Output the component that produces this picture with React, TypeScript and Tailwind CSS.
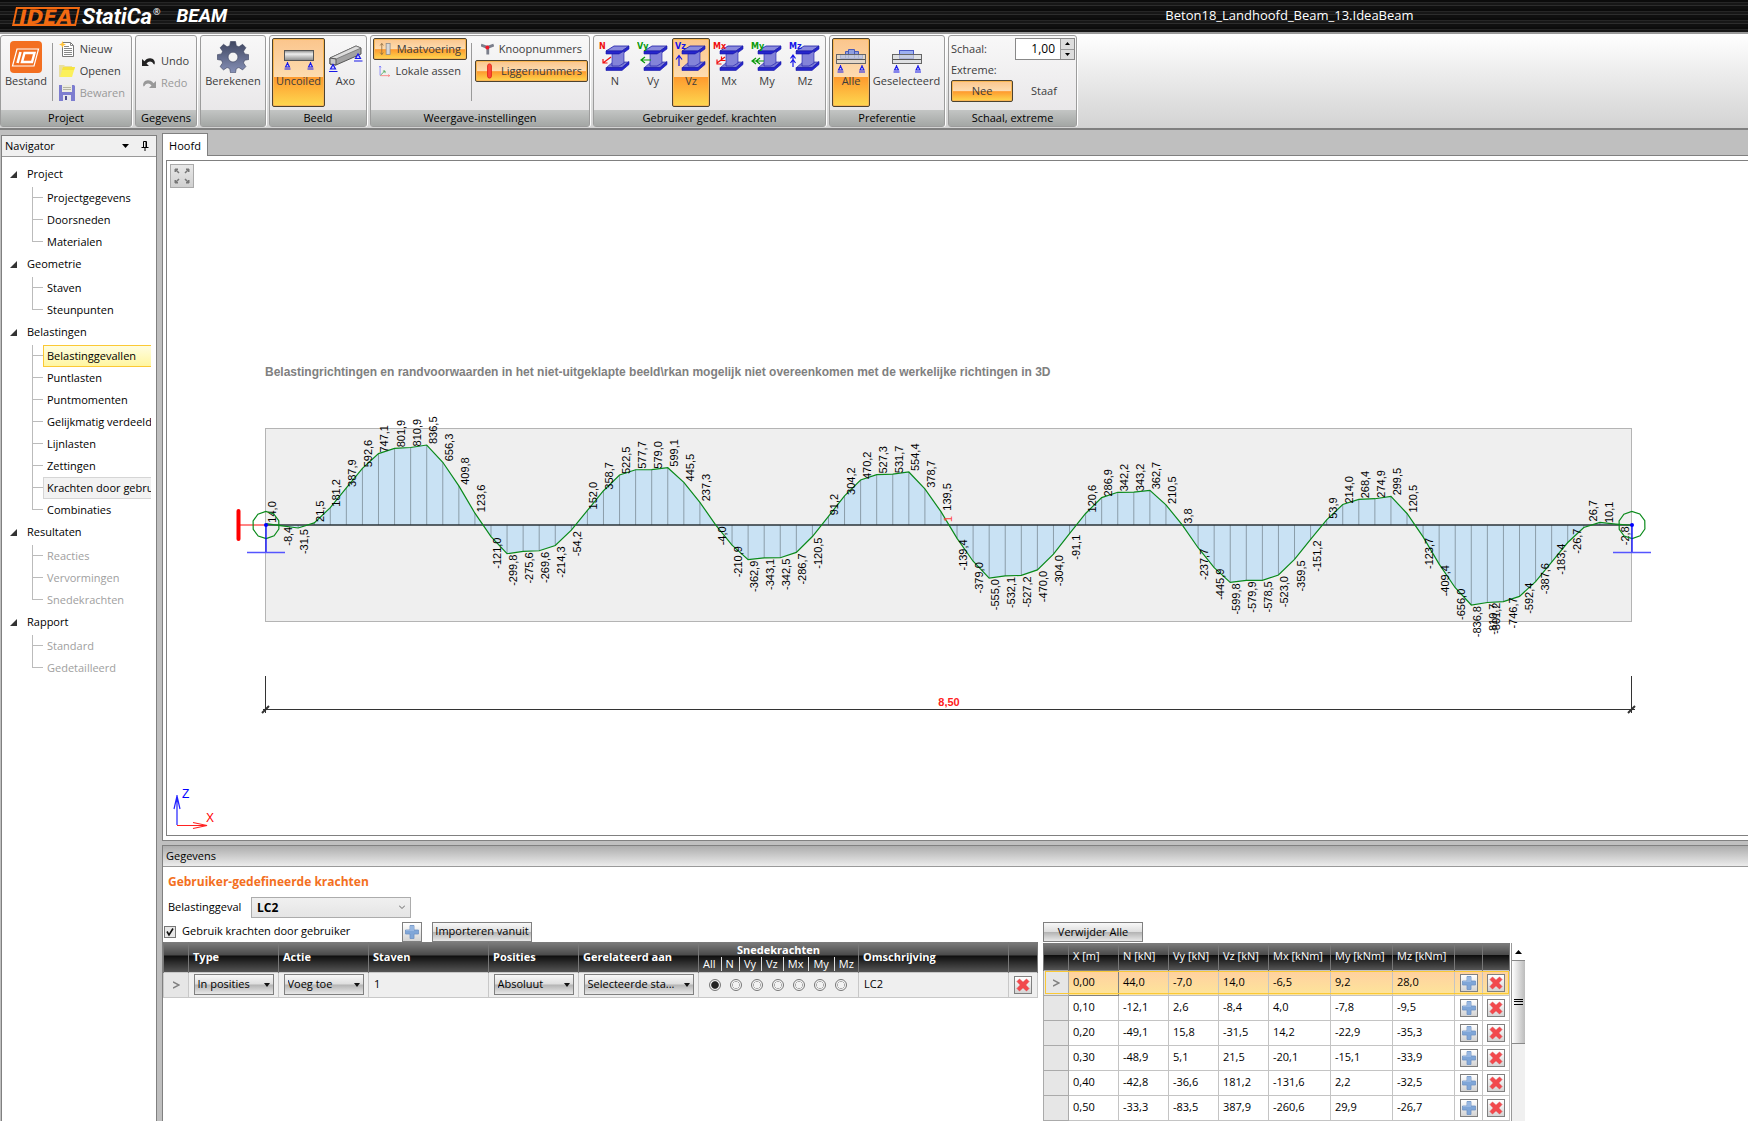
import type { ReactNode } from "react";
import clsx from "clsx";

/* ---------- data ---------- */

const NAV = [
  { title: "Project", items: ["Projectgegevens", "Doorsneden", "Materialen"] },
  { title: "Geometrie", items: ["Staven", "Steunpunten"] },
  {
    title: "Belastingen",
    items: [
      "Belastinggevallen",
      "Puntlasten",
      "Puntmomenten",
      "Gelijkmatig verdeeld",
      "Lijnlasten",
      "Zettingen",
      "Krachten door gebruiker",
      "Combinaties",
    ],
  },
  { title: "Resultaten", disabled: true, items: ["Reacties", "Vervormingen", "Snedekrachten"] },
  { title: "Rapport", disabled: true, items: ["Standard", "Gedetailleerd"] },
];

// Vz every 0,10 m
const VZ = [
  14.0, -8.4, -31.5, 21.5, 181.2, 387.9, 592.6, 747.1, 801.9, 810.9, 836.5, 656.3, 409.8, 123.6,
  -121.0, -299.8, -275.6, -269.6, -214.3, -54.2, 152.0, 358.7, 522.5, 577.7, 579.0, 599.1, 445.5,
  237.3, -4.0, -210.9, -362.9, -343.1, -342.5, -286.7, -120.5, 91.2, 304.2, 470.2, 527.3, 531.7,
  554.4, 378.7, 139.5, -139.4, -379.0, -555.0, -532.1, -527.2, -470.0, -304.0, -91.1, 120.6, 286.9,
  342.2, 343.2, 362.7, 210.5, 3.8, -237.7, -445.9, -599.8, -579.9, -578.5, -523.0, -359.5, -151.2,
  53.9, 214.0, 268.4, 274.9, 299.5, 120.5, -123.7, -409.4, -656.0, -836.8, -810.7, -801.2, -746.7,
  -592.4, -387.6, -183.4, -26.7, 26.7, 10.1, -2.8,
];

const FORCE_COLS = ["X [m]", "N [kN]", "Vy [kN]", "Vz [kN]", "Mx [kNm]", "My [kNm]", "Mz [kNm]"];
const FORCES = [
  ["0,00", "44,0", "-7,0", "14,0", "-6,5", "9,2", "28,0"],
  ["0,10", "-12,1", "2,6", "-8,4", "4,0", "-7,8", "-9,5"],
  ["0,20", "-49,1", "15,8", "-31,5", "14,2", "-22,9", "-35,3"],
  ["0,30", "-48,9", "5,1", "21,5", "-20,1", "-15,1", "-33,9"],
  ["0,40", "-42,8", "-36,6", "181,2", "-131,6", "2,2", "-32,5"],
  ["0,50", "-33,3", "-83,5", "387,9", "-260,6", "29,9", "-26,7"],
];

const PARTS = ["All", "N", "Vy", "Vz", "Mx", "My", "Mz"];

/* ---------- icons ---------- */

const FileIcon = () => (
  <svg width="16" height="16" viewBox="0 0 16 16">
    <path d="M3.500 1.500h8l3 3v11h-11z" fill="#fff" stroke="#777" />
    <path d="M11.500 1.500v3h3M5 5.500h5M5 7.500h8M5 9.500h8M5 11.500h8M5 13.500h8" fill="none" stroke="#888" />
    <path d="M3.500 0l1 2.500L7 3.500l-2.500 1-1 2.500-1-2.500L0 3.500l2.500-1z" fill="#ffc23c" />
  </svg>
);

const FolderIcon = () => (
  <svg width="16" height="16" viewBox="0 0 16 16">
    <path d="M0 2h5l1 1h7v11H0z" fill="#e9dfa0" />
    <path d="M4 4h12l-3 10H1z" fill="#fbf05c" />
    <path d="M4 4h12l-1 3H3z" fill="#f6e33f" />
  </svg>
);

const SaveIcon = () => (
  <svg width="16" height="16" viewBox="0 0 16 16">
    <path d="M0 0h15l1 1v15H0z" fill="#7d7dd0" />
    <path d="M3 0h10v7H3z" fill="#ecece0" />
    <path d="M4 2.500h8M4 4.500h8" stroke="#b5b5a5" />
    <path d="M4 10h8v6H4z" fill="#e6e6ee" />
    <path d="M6 11h2v4H6z" fill="#4c4c90" />
  </svg>
);

const UndoIcon = ({ flip }: { flip?: boolean }) => (
  <svg
    width="14"
    height="9"
    viewBox="0 0 14 9"
    className={clsx(flip && "-scale-x-100")}
    fill={flip ? "#999" : "#222"}
  >
    <path d="M0 2v7h7L4.500 6.500C6.500 4 9.500 3.500 11.500 7l1 .5C14 4 11 1 8 1.200 5.500 1.200 3.800 2.500 2.500 4.200z" />
  </svg>
);

const GearIcon = () => (
  <svg width="32" height="32" viewBox="0 0 32 32">
    <defs>
      <linearGradient id="gear" x1="0" y1="0" x2="0" y2="1">
        <stop offset="0" stopColor="#3f4660" />
        <stop offset="1" stopColor="#8791b8" />
      </linearGradient>
    </defs>
    <g fill="url(#gear)" stroke="#3a415c" strokeWidth="0.600">
      <path
        fillRule="evenodd"
        d="M13.500 0.500h5l.8 4.200 2.600 1.100 3.700-2.500 3.300 3.400-2.400 3.600 1.100 2.600 4.200.8v4.800l-4.200.8-1.100 2.600 2.400 3.700-3.300 3.300-3.700-2.400-2.600 1.100-.8 4.200h-5l-.8-4.200-2.600-1.100-3.600 2.400-3.400-3.300 2.500-3.700-1.100-2.600L.3 18.500v-4.800l4.200-.8 1.100-2.600-2.500-3.600 3.400-3.400 3.600 2.500 2.600-1.100zM16 11.200a4.900 4.900 0 1 0 0 9.800 4.900 4.900 0 0 0 0-9.800z"
      />
    </g>
  </svg>
);

const Support = ({ x, y }: { x: number; y: number }) => (
  <path
    d={`M${x} ${y}l-2 4h4zM${x - 3} ${y + 6}h6M${x} ${y - 1}v2`}
    fill="#c8c8ff"
    stroke="#1818e8"
    strokeWidth="1.100"
  />
);

const BeamIcon = () => (
  <svg width="32" height="32" viewBox="0 0 32 32">
    <defs>
      <linearGradient id="bar" x1="0" y1="0" x2="0" y2="1">
        <stop offset="0" stopColor="#888" />
        <stop offset="0.350" stopColor="#eee" />
        <stop offset="1" stopColor="#888" />
      </linearGradient>
    </defs>
    <rect x="1.500" y="9.500" width="29" height="10" fill="url(#bar)" stroke="#555" />
    <Support x={4.5} y={22} />
    <Support x={27.5} y={22} />
  </svg>
);

const AxoIcon = () => (
  <svg width="34" height="32" viewBox="0 0 34 32">
    <path d="M1 17L27 5l5 2v6L7 24l-6-1z" fill="#a2a2a2" stroke="#555" />
    <path d="M1 17l6 1L32 7 27 5z" fill="#ddd" stroke="#666" strokeWidth="0.700" />
    <path d="M1 17l6 1v6l-6-1z" fill="#c9c9c9" stroke="#555" />
    <path d="M4 23.500l-2.500 4.500h5zM0 30.500h8.500M29 13l-2.500 4.500h5zM25 20h8.500" fill="#c8c8ff" stroke="#1818e8" strokeWidth="1.200" />
  </svg>
);

const DimensionIcon = () => (
  <svg width="16" height="16" viewBox="0 0 16 16">
    <path d="M3.500 1v14M1.500 3.500l2-2.500 2 2.500M1.500 12.500l2 2.500 2-2.500" fill="none" stroke="#8a6a40" />
    <rect x="9" y="1" width="5" height="14" fill="#d8d8d8" stroke="#8b8b8b" />
  </svg>
);

const AxesIcon = () => (
  <svg width="16" height="16" viewBox="0 0 16 16">
    <path d="M1.500 14V1M0 3l1.500-2L3 3" fill="none" stroke="#6a6aff" />
    <path d="M2 14.500h13M13 13l2 1.500-2 1.500" fill="none" stroke="#ff6a6a" />
    <path d="M2 14l6-6M5.500 8h3v3" fill="none" stroke="#2a9a3a" />
  </svg>
);

const NodeIcon = () => (
  <svg width="16" height="14" viewBox="0 0 16 14">
    <path d="M0 2l8 3 8-3M8.500 5v9" fill="none" stroke="#7b7f8c" strokeWidth="3.500" />
    <circle cx="8" cy="5" r="2.500" fill="#f01828" />
  </svg>
);

const MemberIcon = () => (
  <svg width="16" height="16" viewBox="0 0 16 16">
    <rect x="7" y="0.500" width="4" height="15" rx="2" fill="#ff4a3c" stroke="#e02818" />
  </svg>
);

const ARROWS: Record<string, string> = {
  N: "M12 16l-8 6M4 18v4h4.500",
  Vy: "M14 19H4M8 16l-4 3 4 3",
  Vz: "M4 25V15M1 18.500l3-4 3 4",
  Mx: "M12 16l-8 6M4 18.500V23h4.500M8.500 15.500v4h4",
  My: "M13 20H1M5 17l-4 3 4 3M9 17l-4 3 4 3",
  Mz: "M4 26V14M1.500 17.500L4 14l2.500 3.500M1.500 22L4 18.500 6.500 22",
};

const ForceIcon = ({ name }: { name: string }) => {
  const c = { N: "#f01010", x: "#f01010", y: "#0a9a0a", z: "#1414e8" }[name.slice(-1)];
  return (
    <svg width="32" height="32" viewBox="0 0 32 32">
      <path d="M7 10l8-5h15l-7 5z" fill="#8a8adc" stroke="#1a1aa8" strokeWidth="0.800" />
      <path d="M7 10h16l7-5v3l-7 5H7z" fill="#2626cc" stroke="#1a1aa8" strokeWidth="0.600" />
      <path d="M8 26l6-5h16l-7 6H8z" fill="#7a7ad2" stroke="#1a1aa8" strokeWidth="0.600" />
      <path d="M13 13h7l5-3v12l-5 3h-7z" fill="#8383d8" stroke="#1a1aa8" strokeWidth="0.600" />
      <path d="M7 26.500h16l7-6v3l-7 6H7z" fill="#2626cc" stroke="#1a1aa8" strokeWidth="0.600" />
      <path d={ARROWS[name]} fill="none" stroke={c} strokeWidth="1.200" />
      <text x="0" y="8" fill={c} className="font-['DejaVu_Sans'] text-[8px] font-bold">
        {name}
      </text>
    </svg>
  );
};

const LoadIcon = ({ all }: { all?: boolean }) => (
  <svg width="32" height="32" viewBox="0 0 32 32">
    {all && <path d="M5.500 17.500v-4h5v-3h3v-2h6v2h4v3h4v4z" fill="#8f9fdf" stroke="#4a5ab8" />}
    {all && <path d="M10.500 17v-4M13.500 17v-7M19.500 17v-7M23.500 17v-4" stroke="#4a5ab8" />}
    {!all && <rect x="8.500" y="9.500" width="14" height="8" fill="#9db0f0" stroke="#4a5ac8" />}
    <rect x="1.500" y="13.500" width="29" height="9" fill="#d5d8dc" fillOpacity="0.700" stroke="#666" />
    <path d="M2 18.500h28" stroke="#555" />
    <Support x={5.5} y={25} />
    <Support x={27} y={25} />
  </svg>
);

const PlusIcon = () => (
  <svg width="14" height="14" viewBox="0 0 14 14">
    <path d="M5 .5h4V5h4.500v4H9v4.500H5V9H.5V5H5z" fill="#7fa6d8" stroke="#6e93c4" strokeWidth="0.800" />
    <path d="M5 1h4v5H1V5h4z" fill="#a9c5ea" fillOpacity="0.600" />
  </svg>
);

const CrossIcon = () => (
  <svg width="14" height="14" viewBox="0 0 14 14">
    <path
      d="M1 3.500L3.500 1 7 4.300 10.500 1 13 3.500 9.700 7l3.300 3.500-2.500 2.500L7 9.700 3.500 13 1 10.500 4.300 7z"
      fill="#f2494d"
      stroke="#e8383e"
      strokeWidth="0.600"
    />
  </svg>
);

const Caret = () => (
  <svg
    width="6"
    height="4"
    viewBox="0 0 6 4"
    className="pointer-events-none absolute top-1/2 right-[4px] -translate-y-1/2"
  >
    <path d="M0 0h6L3 4z" fill="#111" />
  </svg>
);

/* ---------- ribbon ---------- */

const Group = ({ label, width, children }: { label: string; width: string; children: ReactNode }) => (
  <section
    className={clsx(
      "flex h-[92px] shrink-0 flex-col rounded-[3px] border border-[#9c9c9c] bg-linear-to-b from-[#f8f8f8] to-[#e6e4e6] shadow-[1px_0_0_#fff]",
      width,
    )}
  >
    <div className="flex min-h-0 flex-1 pt-[2px]">{children}</div>
    <h2 className="h-4 bg-linear-to-b from-[#c3c5c4] to-[#a4a7a5] text-center leading-4 text-black">
      {label}
    </h2>
  </section>
);

const BigButton = ({
  label,
  active,
  width,
  children,
}: {
  label: string;
  active?: boolean;
  width: string;
  children: ReactNode;
}) => (
  <button
    className={clsx(
      "flex h-[69px] shrink-0 flex-col items-center rounded-[2px] border pt-[2px] whitespace-nowrap",
      width,
      active
        ? "border-[#4d4330] bg-[linear-gradient(#fbc58c,#fddcb0_56%,#fe9a2e_57%,#fdd850)] shadow-[inset_0_0_0_1px_#f8b653]"
        : "border-transparent",
    )}
  >
    {children}
    <span className="leading-4">{label}</span>
  </button>
);

const SmallButton = ({
  label,
  active,
  disabled,
  className,
  children,
}: {
  label: string;
  active?: boolean;
  disabled?: boolean;
  className?: string;
  children?: ReactNode;
}) => (
  <button
    disabled={disabled}
    className={clsx(
      "flex h-[22px] items-center gap-[5px] rounded-[2px] border px-[5px] whitespace-nowrap disabled:text-[#999]",
      active
        ? "border-[#4d4330] bg-[linear-gradient(#fbc58c,#fddcb0_50%,#fe9a2e_53%,#fdd850)] shadow-[inset_0_0_0_1px_#f8b653]"
        : "border-transparent",
      className,
    )}
  >
    {children}
    {label}
  </button>
);

const Divider = () => <div className="mt-[5px] h-[58px] w-px shrink-0 bg-[#9a9a9a]" />;

const Ribbon = () => (
  <header className="flex h-[98px] shrink-0 gap-[3px] border-t-2 border-b-2 border-t-[#999] border-b-[#808080] bg-linear-to-b from-white to-[#d3d3d3] pt-px text-[#3c3c3c]">
    <Group label="Project" width="w-[132px]">
      <BigButton label="Bestand" width="w-[50px]">
        <svg width="32" height="32" viewBox="0 0 32 32">
          <rect width="32" height="32" rx="4" fill="#f36f21" />
          <path d="M7 8h21.500l-4.500 17H2.500z" fill="none" stroke="#fff" strokeWidth="1.200" />
          <path d="M10.500 11l-3 11" fill="none" stroke="#fff" strokeWidth="2.600" />
          <path d="M14.500 12h10l-2.500 9h-10z" fill="none" stroke="#fff" strokeWidth="2.400" />
        </svg>
      </BigButton>
      <div className="w-[4px]" />
      <Divider />
      <div>
        <SmallButton label="Nieuw">
          <FileIcon />
        </SmallButton>
        <SmallButton label="Openen">
          <FolderIcon />
        </SmallButton>
        <SmallButton label="Bewaren" disabled>
          <SaveIcon />
        </SmallButton>
      </div>
    </Group>
    <Group label="Gegevens" width="w-[62px]">
      <div className="pt-3">
        <SmallButton label="Undo">
          <UndoIcon />
        </SmallButton>
        <SmallButton label="Redo" disabled>
          <UndoIcon flip />
        </SmallButton>
      </div>
    </Group>
    <Group label="" width="w-[66px]">
      <BigButton label="Berekenen" width="w-[64px]">
        <GearIcon />
      </BigButton>
    </Group>
    <Group label="Beeld" width="w-[98px]">
      <div className="w-[2px]" />
      <BigButton label="Uncoiled" width="w-[53px]" active>
        <BeamIcon />
      </BigButton>
      <BigButton label="Axo" width="w-[41px]">
        <AxoIcon />
      </BigButton>
    </Group>
    <Group label="Weergave-instellingen" width="w-[220px]">
      <div className="px-[2px]">
        <SmallButton label="Maatvoering" active className="w-[94px]">
          <DimensionIcon />
        </SmallButton>
        <SmallButton label="Lokale assen" className="w-[94px]">
          <AxesIcon />
        </SmallButton>
      </div>
      <div className="w-[2px]" />
      <Divider />
      <div className="pl-[3px]">
        <SmallButton label="Knoopnummers" className="w-[113px] px-[2px]">
          <NodeIcon />
        </SmallButton>
        <SmallButton label="Liggernummers" active className="w-[113px] px-[2px]">
          <MemberIcon />
        </SmallButton>
      </div>
    </Group>
    <Group label="Gebruiker gedef. krachten" width="w-[233px]">
      <div className="w-[2px]" />
      {["N", "Vy", "Vz", "Mx", "My", "Mz"].map((n) => (
        <BigButton key={n} label={n} width="w-[38px]" active={n === "Vz"}>
          <ForceIcon name={n} />
        </BigButton>
      ))}
    </Group>
    <Group label="Preferentie" width="w-[116px]">
      <div className="w-[2px]" />
      <BigButton label="Alle" width="w-[38px]" active>
        <LoadIcon all />
      </BigButton>
      <BigButton label="Geselecteerd" width="w-[73px]">
        <LoadIcon />
      </BigButton>
    </Group>
    <Group label="Schaal, extreme" width="w-[129px]">
      <div className="flex flex-1 flex-col px-[2px]">
        <div className="flex h-[22px] items-center justify-between">
          <label htmlFor="schaal">Schaal:</label>
          <div className="flex h-[22px] w-[60px] border border-[#888] bg-white">
            <input
              id="schaal"
              defaultValue="1,00"
              className="w-[44px] pr-[5px] text-right text-[12px] text-black outline-none"
            />
            <div className="flex w-[14px] flex-col border-l border-[#999]">
              <button aria-label="Omhoog" className="flex flex-1 items-center justify-center border-b border-[#999] bg-[#ddd]">
                <svg width="5" height="3" viewBox="0 0 5 3">
                  <path d="M0 3h5L2.500 0z" />
                </svg>
              </button>
              <button aria-label="Omlaag" className="flex flex-1 items-center justify-center bg-[#ddd]">
                <svg width="5" height="3" viewBox="0 0 5 3">
                  <path d="M0 0h5L2.500 3z" />
                </svg>
              </button>
            </div>
          </div>
        </div>
        <span className="leading-5">Extreme:</span>
        <div className="flex">
          <SmallButton label="Nee" active className="w-[62px] justify-center" />
          <SmallButton label="Staaf" className="w-[62px] justify-center" />
        </div>
      </div>
    </Group>
  </header>
);

const TitleBar = () => (
  <div className="flex h-8 shrink-0 items-center bg-[#161616] bg-[repeating-linear-gradient(#0c0c0c_0_2px,#262626_2px_3px,#171717_3px_5px,#2d2d2d_5px_6px,#101010_6px_9px)] pl-[14px] text-white">
    <div className="flex h-[19px] w-[64px] -skew-x-12 items-center justify-center border-2 border-[#f26a11] font-['DejaVu_Sans'] text-[20px] leading-none font-bold text-[#f26a11]">
      IDEA
    </div>
    <span className="ml-[4px] font-['Roboto'] text-[22px] font-bold italic">StatiCa</span>
    <sup className="ml-px text-[9px]">®</sup>
    <span className="ml-[16px] font-['Roboto'] text-[19px] font-bold italic">BEAM</span>
    <span className="absolute left-2/3 text-[13px]">Beton18_Landhoofd_Beam_13.IdeaBeam</span>
  </div>
);

/* ---------- navigator ---------- */

const Navigator = () => (
  <nav className="mt-[5px] ml-px flex w-[156px] shrink-0 flex-col border border-b-0 border-[#808080] bg-white text-black">
    <div className="flex h-[21px] shrink-0 items-center border-b border-[#999] bg-[#f0f0f0] pl-[3px]">
      <span className="flex-1">Navigator</span>
      <svg width="7" height="4" viewBox="0 0 7 4" className="mr-[12px]">
        <path d="M0 0h7L3.500 4z" />
      </svg>
      <svg width="8" height="10" viewBox="0 0 8 10" className="mr-[7px]" fill="none" stroke="#000">
        <path d="M2.500 6V.5h3V6M.5 6.500h7M4 6.500V10M5 1v5" />
      </svg>
    </div>
    <div className="pt-[6px] pr-[5px] pl-px">
      {NAV.map((g) => (
        <div key={g.title}>
          <div className="mb-[2px] flex h-[22px] items-center">
            <svg width="7" height="7" viewBox="0 0 7 7" className="mr-[10px] ml-[7px]">
              <path d="M7 0v7H0z" fill="#333" />
            </svg>
            {g.title}
          </div>
          <ul className="overflow-hidden pl-[29px]">
            {g.items.map((item, i) => (
              <li key={item} className="flex h-[22px]">
                <span className="flex w-[11px] shrink-0 flex-col">
                  <span className="h-[11px] border-b border-l border-[#bbb]" />
                  {i < g.items.length - 1 && <span className="flex-1 border-l border-[#bbb]" />}
                </span>
                <a
                  href="#"
                  className={clsx(
                    "block flex-1 overflow-hidden border border-r-0 pl-[3px] leading-5 whitespace-nowrap",
                    item === "Belastinggevallen"
                      ? "border-[#fbc935] bg-linear-to-b from-[#fffde0] to-[#fff6a0]"
                      : item.startsWith("Krachten")
                        ? "border-[#d5d5d5] bg-[#f2f2f2]"
                        : "border-transparent",
                    g.disabled && "text-[#a0a0a0]",
                  )}
                >
                  {item}
                </a>
              </li>
            ))}
          </ul>
        </div>
      ))}
    </div>
  </nav>
);

/* ---------- diagram ---------- */

const X0 = 99;
const X1 = 1465;
const AXIS = 364;
const STEP = (X1 - X0) / (VZ.length - 1);
const px = (i: number) => X0 + i * STEP;
const py = (v: number) => AXIS - v * 0.0956;

const End = ({ x }: { x: number }) => (
  <g fill="none">
    <polygon
      points={Array.from({ length: 10 }, (_, k) => {
        const a = (k * Math.PI) / 5 + 0.3;
        return `${x + 13.5 * Math.cos(a)},${AXIS + 13.5 * Math.sin(a)}`;
      }).join(" ")}
      stroke="#0a8a1a"
      strokeWidth="1.200"
    />
    <path d={`M${x} ${AXIS}v27.500`} stroke="#0000ff" strokeWidth="1.300" />
    <path d={`M${x - 19} ${AXIS + 27.5}h38`} stroke="#5555ff" strokeWidth="1.500" />
    <circle cx={x} cy={AXIS} r="2" fill="#0000ff" />
  </g>
);

const Diagram = () => (
  <svg className="block h-full w-full font-['Liberation_Sans']">
    <text x={X0 - 1} y="215" fill="#808080" className="text-[12px] font-bold">
      {"Belastingrichtingen en randvoorwaarden in het niet-uitgeklapte beeld\\rkan mogelijk niet overeenkomen met de werkelijke richtingen in 3D"}
    </text>
    <rect x={X0 - 0.5} y="267.500" width={X1 - X0} height="193" fill="#efefef" stroke="#b4b4b4" />
    <polygon
      points={`${X0},${AXIS} ${VZ.map((v, i) => `${px(i)},${py(v)}`).join(" ")} ${X1},${AXIS}`}
      fill="#c9e2f4"
    />
    {VZ.map((v, i) => (
      <path key={i} d={`M${px(i)} ${AXIS}V${py(v)}`} stroke="#8b9da9" />
    ))}
    <path d={`M${X0} ${AXIS}H${X1}`} stroke="#2a3338" strokeWidth="1.300" />
    <polyline
      points={VZ.map((v, i) => `${px(i)},${py(v)}`).join(" ")}
      fill="none"
      stroke="#0a8a1a"
      strokeWidth="1.200"
    />
    {/* labels flip to the other side of their ordinate near the right end */}
    {VZ.map((v, i) => {
      const x = px(i) + (i > 76 ? -3 : 10);
      const y = v < 0 ? py(v) + 1 : py(v) - 1;
      return (
        <text
          key={i}
          transform={`translate(${x} ${y}) rotate(-90)`}
          textAnchor={v < 0 ? "end" : "start"}
          className="text-[11px]"
        >
          {v.toFixed(1).replace(".", ",")}
        </text>
      );
    })}
    <text transform="translate(785 361) rotate(-90)" fill="#ff4040" className="text-[11px]">
      1
    </text>
    {/* fixed support left */}
    <path d={`M${X0} ${AXIS}H72`} stroke="#ff3333" strokeWidth="1.200" />
    <path d="M71.500 350v28" stroke="#ff0000" strokeWidth="4" strokeLinecap="round" />
    <End x={X0} />
    <End x={X1} />
    {/* dimension line */}
    <g stroke="#333" fill="none">
      <path d={`M${X0 - 3} 548.500H${X1 + 3}M${X0 - 0.5} 515v37M${X1 - 0.5} 515v37`} />
      <path d={`M${X0 - 4} 552l7-7M${X1 - 4} 552l7-7`} strokeWidth="2" />
    </g>
    <text x={(X0 + X1) / 2} y="545" textAnchor="middle" fill="#ff2020" className="text-[11px] font-bold">
      8,50
    </text>
    {/* axis cross */}
    <path d="M10 664v-30M7 648l3-13 3 13" fill="none" stroke="#2222ff" strokeWidth="1.200" />
    <path d="M10 664.500h30M26 661.500l14 3-14 3" fill="none" stroke="#ff2222" strokeWidth="1.200" />
    <text x="15" y="637" fill="#0000ff" className="text-[12px]">
      Z
    </text>
    <text x="39" y="661" fill="#ff0000" className="text-[12px]">
      X
    </text>
  </svg>
);

/* ---------- data panel ---------- */

const HEAD =
  "bg-[linear-gradient(#7d7d7d,#4a4a4a_44%,#0e0e0e_46%,#555)] text-white border-x border-[#777] text-left";
const GREY_BTN =
  "border border-[#808080] bg-[linear-gradient(#f8f8f8,#dedede_48%,#b4b4b4_52%,#e8e8e8)] text-black";

const IconButton = ({ label, size = "size-[18px]", children }: { label: string; size?: string; children: ReactNode }) => (
  <button
    aria-label={label}
    className={clsx("mx-auto flex items-center justify-center border border-[#808080] bg-linear-to-b from-white to-[#d4d4d4]", size)}
  >
    {children}
  </button>
);

const CellSelect = ({ label, value, width = "w-[80px]" }: { label: string; value: string; width?: string }) => (
  <div className={clsx("relative mx-auto", width)}>
    <select aria-label={label} className={clsx("block h-[21px] w-full appearance-none pl-[3px]", GREY_BTN)}>
      <option>{value}</option>
    </select>
    <Caret />
  </div>
);

const RowMark = () => (
  <svg width="7" height="8" viewBox="0 0 7 8" className="mx-auto" fill="none" stroke="#808080" strokeWidth="1.500">
    <path d="M0 .8L6 4 0 7.200" />
  </svg>
);

const LoadTable = () => (
  <table className="w-[874px] table-fixed border-collapse">
    <colgroup>
      <col className="w-[25px]" />
      <col className="w-[90px]" />
      <col className="w-[90px]" />
      <col className="w-[120px]" />
      <col className="w-[90px]" />
      <col className="w-[120px]" />
      <col className="w-[160px]" />
      <col className="w-[150px]" />
      <col className="w-[29px]" />
    </colgroup>
    <thead>
      <tr className="h-[30px]">
        <th className={HEAD} />
        {["Type", "Actie", "Staven", "Posities", "Gerelateerd aan"].map((h) => (
          <th key={h} className={clsx(HEAD, "pl-[4px]")}>
            {h}
          </th>
        ))}
        <th className={HEAD}>
          <div className="text-center leading-[14px]">Snedekrachten</div>
          <div className="flex justify-between px-[4px] leading-[14px] font-normal">
            {PARTS.map((p, i) => (
              <span key={p} className={clsx(i > 0 && "border-l border-[#ddd] pl-[4px]")}>
                {p}
              </span>
            ))}
          </div>
        </th>
        <th className={clsx(HEAD, "pl-[4px]")}>Omschrijving</th>
        <th className={HEAD} />
      </tr>
    </thead>
    <tbody>
      <tr className="h-[25px] bg-[#efefef] [&>td]:border [&>td]:border-[#c8c8c8] [&>td]:p-0">
        <td className="bg-[#e6e6e6]">
          <RowMark />
        </td>
        <td>
          <CellSelect label="Type" value="In posities" />
        </td>
        <td>
          <CellSelect label="Actie" value="Voeg toe" />
        </td>
        <td>
          <span className="pl-[5px]">1</span>
        </td>
        <td>
          <CellSelect label="Posities" value="Absoluut" />
        </td>
        <td>
          <CellSelect label="Gerelateerd aan" value="Selecteerde sta..." width="w-[110px]" />
        </td>
        <td>
          <div className="flex gap-[9px] pl-[10px]">
            {PARTS.map((p) => (
              <input
                key={p}
                type="radio"
                name="kracht"
                aria-label={p}
                defaultChecked={p === "All"}
                className="size-[12px] appearance-none rounded-full border border-[#777] bg-[radial-gradient(#f2f2f2_45%,#aaa_50%,#f4f4f4_58%)] checked:bg-[radial-gradient(#222_45%,#666_52%,#eee_58%)]"
              />
            ))}
          </div>
        </td>
        <td>
          <span className="pl-[5px]">LC2</span>
        </td>
        <td>
          <IconButton label="Verwijder">
            <CrossIcon />
          </IconButton>
        </td>
      </tr>
    </tbody>
  </table>
);

const ForceTable = () => (
  <table className="w-[466px] table-fixed border-collapse">
    <colgroup>
      <col className="w-[25px]" />
      <col className="w-[50px]" />
      <col className="w-[50px]" />
      <col className="w-[50px]" />
      <col className="w-[50px]" />
      <col className="w-[62px]" />
      <col className="w-[62px]" />
      <col className="w-[62px]" />
      <col className="w-[28px]" />
      <col className="w-[27px]" />
    </colgroup>
    <thead>
      <tr className="h-[27px]">
        <th className={HEAD} />
        {FORCE_COLS.map((h) => (
          <th key={h} className={clsx(HEAD, "pl-[4px] font-normal whitespace-nowrap")}>
            {h}
          </th>
        ))}
        <th className={HEAD} />
        <th className={HEAD} />
      </tr>
    </thead>
    <tbody>
      {FORCES.map((row, r) => (
        <tr
          key={r}
          className={clsx(
            "h-[25px]",
            r === 0 && "bg-linear-to-b from-[#ffcfa0] to-[#fde59a] outline-1 -outline-offset-2 outline-[#fbc935]",
          )}
        >
          <td className="border border-[#aaa] bg-[#e6e6e6] p-0">{r === 0 && <RowMark />}</td>
          {row.map((v, i) => (
            <td
              key={i}
              className={clsx(
                "border p-0 pl-[4px]",
                r === 0 && i === 0 ? "border-[#808080]" : "border-[#c4c4c4]",
              )}
            >
              {v}
            </td>
          ))}
          <td className="border border-[#c4c4c4] p-0">
            <IconButton label="Toevoegen">
              <PlusIcon />
            </IconButton>
          </td>
          <td className="border border-[#c4c4c4] p-0">
            <IconButton label="Verwijder">
              <CrossIcon />
            </IconButton>
          </td>
        </tr>
      ))}
    </tbody>
  </table>
);

const DataPanel = () => (
  <section className="flex h-[276px] shrink-0 flex-col overflow-hidden border-t border-l border-[#808080] bg-white text-black">
    <h2 className="h-[21px] shrink-0 border-b border-[#999] bg-linear-to-b from-[#adadad] to-[#ececec] pl-[3px] leading-5">
      Gegevens
    </h2>
    <div className="flex items-start gap-[5px]">
      <div>
        <h3 className="mt-[5px] pl-[5px] text-[12px] leading-5 font-bold text-[#f36f21]">
          Gebruiker-gedefineerde krachten
        </h3>
        <div className="mt-[5px] flex h-[21px] items-center pl-[5px]">
          <label htmlFor="geval" className="w-[83px]">
            Belastinggeval
          </label>
          <div className="relative w-[160px]">
            <select
              id="geval"
              className="block h-[21px] w-full appearance-none border border-[#acacac] bg-linear-to-b from-[#f0f0f0] to-[#e5e5e5] pl-[5px] text-[12px] font-bold"
            >
              <option>LC2</option>
            </select>
            <svg
              width="6"
              height="4"
              viewBox="0 0 6 4"
              className="pointer-events-none absolute top-[8px] right-[6px]"
              fill="none"
              stroke="#666"
            >
              <path d="M0 .5l3 3 3-3" />
            </svg>
          </div>
        </div>
        <div className="mt-[3px] flex h-[21px] items-center">
          <div className="flex w-[239px] items-center gap-[6px] pl-[1px]">
            <span className="relative flex">
              <input
                id="gebruik"
                type="checkbox"
                defaultChecked
                className="size-[12px] appearance-none border border-[#777] bg-[#e8e8e8]"
              />
              <svg width="12" height="12" viewBox="0 0 12 12" className="pointer-events-none absolute" fill="none">
                <path d="M3 5.500l2 3.500L9 2.500" stroke="#111" strokeWidth="1.600" />
              </svg>
            </span>
            <label htmlFor="gebruik">Gebruik krachten door gebruiker</label>
          </div>
          <IconButton label="Toevoegen" size="size-[20px] mx-0!">
            <PlusIcon />
          </IconButton>
          <button className={clsx("ml-[10px] h-[20px] w-[100px] whitespace-nowrap", GREY_BTN)}>Importeren vanuit</button>
        </div>
        <LoadTable />
      </div>
      <div className="pt-[55px]">
        <button className={clsx("mb-px block h-[20px] w-[100px]", GREY_BTN)}>Verwijder Alle</button>
        <div className="flex">
          <ForceTable />
          <div className="ml-px flex w-[14px] flex-col border-l border-[#999] bg-[#f0f0f0]">
            <button aria-label="Omhoog" className="flex h-[17px] items-center justify-center bg-white">
              <svg width="7" height="4" viewBox="0 0 7 4">
                <path d="M0 4h7L3.500 0z" />
              </svg>
            </button>
            <div className="flex h-[84px] items-center justify-center border-y border-[#888] bg-linear-to-r from-white to-[#bcbcbc]">
              <div className="h-[6px] w-[9px] border-y border-black bg-[linear-gradient(transparent_1px,#000_1px_2px,transparent_2px)]" />
            </div>
          </div>
        </div>
      </div>
    </div>
  </section>
);

export default function App() {
  return (
    <div className="relative flex h-screen flex-col overflow-hidden bg-[#bfbfbf] font-['Open_Sans',sans-serif] text-[11px]">
      <TitleBar />
      <Ribbon />
      <div className="flex min-h-0 flex-1 gap-[5px]">
        <Navigator />
        <main className="flex min-w-0 flex-1 flex-col pt-[3px]">
          <button className="z-10 -mb-px h-[23px] w-[46px] border border-b-0 border-[#808080] bg-white pt-[2px] leading-4 text-black">
            Hoofd
          </button>
          <div className="mb-[4px] min-h-0 flex-1 border border-r-0 border-[#808080] bg-white pt-[4px] pb-[4px] pl-[3px]">
            <div className="relative h-full border border-r-0 border-[#808080] bg-white">
              <Diagram />
              <button
                aria-label="Passend maken"
                className="absolute top-[3px] left-[3px] flex size-[24px] items-center justify-center border border-[#aaa] bg-linear-to-b from-[#e8e8e8] to-[#d0d0d0]"
              >
                <svg width="16" height="16" viewBox="0 0 16 16" fill="#777" stroke="#777">
                  <path d="M1 1h3L1 4zM15 1v3l-3-3zM1 15v-3l3 3zM15 15h-3l3-3z" />
                  <path d="M2 2l3 3M14 2l-3 3M2 14l3-3M14 14l-3-3" strokeWidth="1.500" />
                </svg>
              </button>
            </div>
          </div>
          <DataPanel />
        </main>
      </div>
    </div>
  );
}
